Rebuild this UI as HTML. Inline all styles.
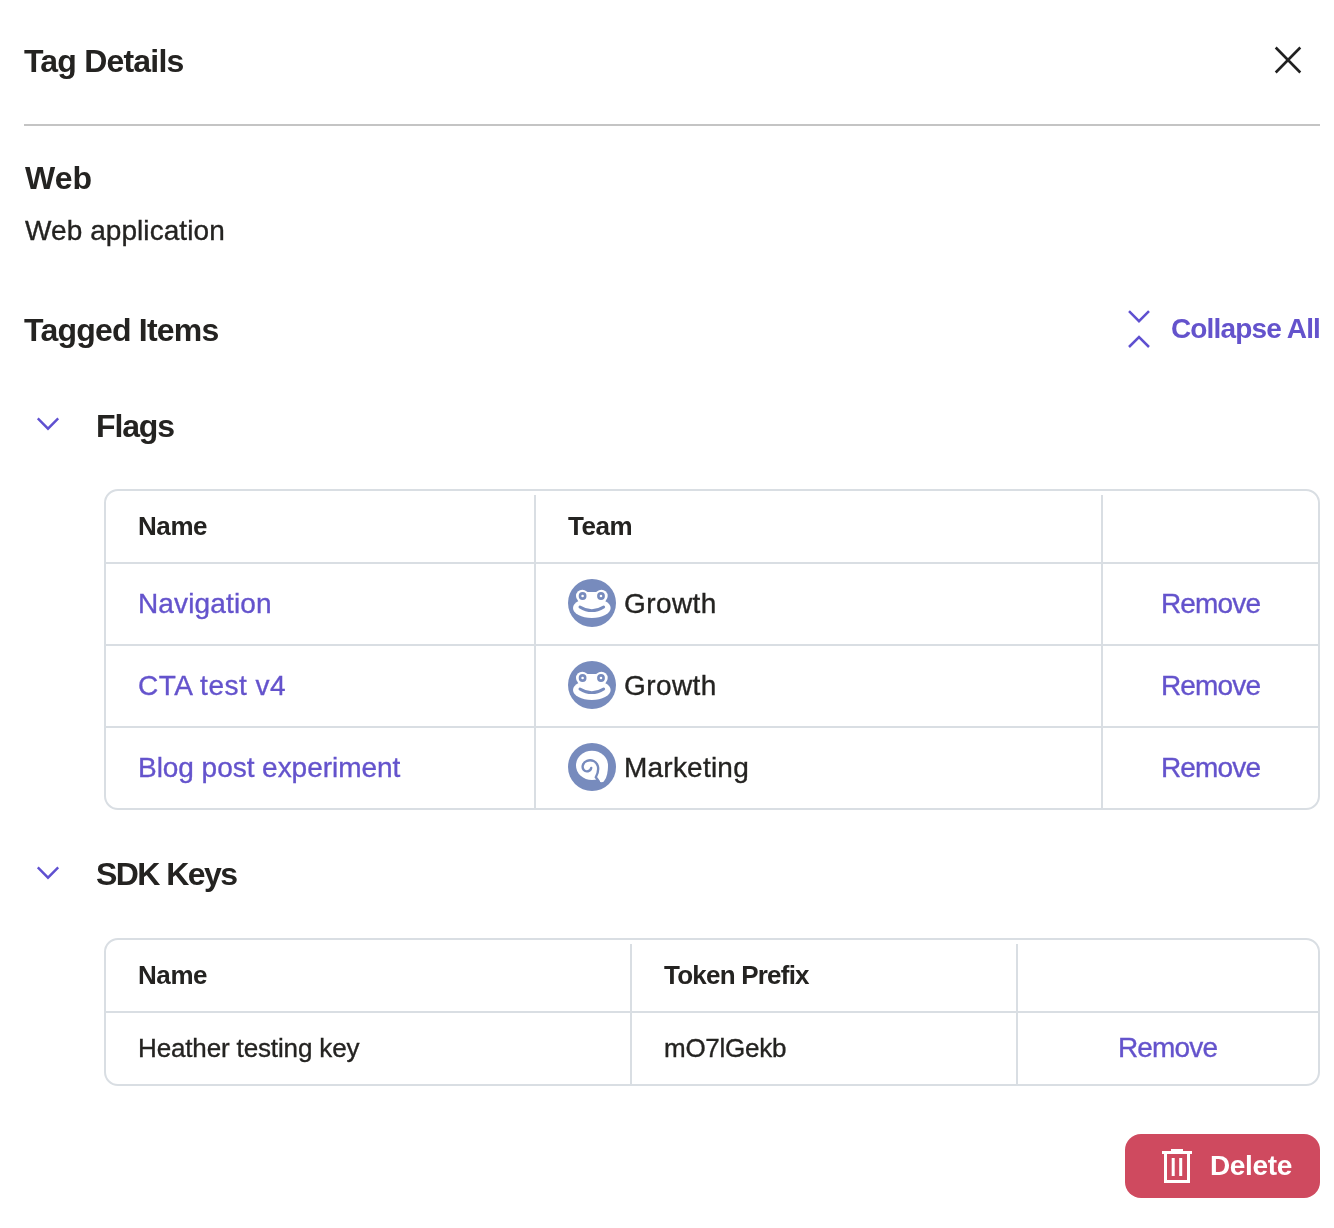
<!DOCTYPE html>
<html>
<head>
<meta charset="utf-8">
<style>
html,body{margin:0;padding:0;background:#fff;}
body{width:1334px;height:1228px;position:relative;overflow:hidden;font-family:"Liberation Sans",sans-serif;color:#242321;}
.t{position:absolute;white-space:nowrap;will-change:transform;}
.b32{font-weight:700;font-size:32px;line-height:32px;}
.b28{font-weight:700;font-size:28px;line-height:28px;}
.b26{font-weight:700;font-size:26px;line-height:26px;}
.r28{font-weight:400;font-size:28px;line-height:28px;-webkit-text-stroke:0.35px currentColor;}
.r26{font-weight:400;font-size:26px;line-height:26px;-webkit-text-stroke:0.35px currentColor;}
.p{color:#6453cc;}
.hl{position:absolute;height:2px;background:#d9dee3;}
.vl{position:absolute;width:2px;background:#d9dee3;}
.box{position:absolute;box-sizing:border-box;border:2px solid #d9dee3;border-radius:14px;}
svg{position:absolute;overflow:visible;}
</style>
</head>
<body>
<!-- header -->
<div class="t b32" style="left:24px;top:45px;letter-spacing:-0.8px;">Tag Details</div>
<svg style="left:1270px;top:42px" width="36" height="36" viewBox="0 0 36 36">
  <path d="M5.7 5.5 L30.3 30.5 M30.3 5.5 L5.7 30.5" stroke="#212121" stroke-width="2.6" fill="none"/>
</svg>
<div style="position:absolute;left:24px;top:124px;width:1296px;height:2px;background:#c4c4c4;"></div>

<div class="t b32" style="left:25px;top:162px;">Web</div>
<div class="t r28" style="left:25px;top:217px;letter-spacing:0.07px;">Web application</div>

<div class="t b32" style="left:24px;top:314px;letter-spacing:-0.78px;">Tagged Items</div>
<svg style="left:1120px;top:300px" width="40" height="56" viewBox="0 0 40 56">
  <path d="M9 11.2 L19 21.2 L29 11.2 M9 47 L19 37 L29 47" stroke="#5f50d0" stroke-width="2.5" fill="none"/>
</svg>
<div class="t b28 p" style="left:1171px;top:315px;letter-spacing:-0.85px;">Collapse All</div>

<!-- Flags -->
<svg style="left:30px;top:410px" width="40" height="30" viewBox="0 0 40 30">
  <path d="M7.8 8.4 L18 18.7 L28.2 8.4" stroke="#5f50d0" stroke-width="2.4" fill="none"/>
</svg>
<div class="t b32" style="left:96px;top:410px;letter-spacing:-1.15px;">Flags</div>

<div class="box" style="left:104px;top:489px;width:1216px;height:321px;"></div>
<div class="hl" style="left:106px;top:562px;width:1212px;"></div>
<div class="hl" style="left:106px;top:644px;width:1212px;"></div>
<div class="hl" style="left:106px;top:726px;width:1212px;"></div>
<div class="vl" style="left:534px;top:495px;height:313px;"></div>
<div class="vl" style="left:1101px;top:495px;height:313px;"></div>

<div class="t b26" style="left:138px;top:513px;letter-spacing:-0.43px;">Name</div>
<div class="t b26" style="left:568px;top:513px;letter-spacing:-0.43px;">Team</div>

<div class="t r28 p" style="left:138px;top:590px;letter-spacing:0.14px;">Navigation</div>
<div class="t r28 p" style="left:138px;top:672px;letter-spacing:0.49px;">CTA test v4</div>
<div class="t r28 p" style="left:138px;top:754px;letter-spacing:-0.04px;">Blog post experiment</div>

<div id="av1" style="position:absolute;left:568px;top:579px;width:48px;height:48px;"><svg width="48" height="48" viewBox="0 0 48 48" style="left:0;top:0">
<circle cx="24" cy="24" r="24" fill="#778bbd"/>
<g fill="#fff"><ellipse cx="23.8" cy="29" rx="18.8" ry="10"/><circle cx="14.3" cy="17" r="6.3"/><circle cx="33.4" cy="17" r="6.3"/><rect x="12" y="13" width="24" height="14"/></g>
<circle cx="14.6" cy="17" r="2.6" fill="#fff" stroke="#778bbd" stroke-width="2.6"/>
<circle cx="33" cy="17" r="2.6" fill="#fff" stroke="#778bbd" stroke-width="2.6"/>
<path d="M11.9 28 Q23.8 35.4 35.7 28" fill="none" stroke="#778bbd" stroke-width="2.8" stroke-linecap="round"/>
</svg></div>
<div id="av2" style="position:absolute;left:568px;top:661px;width:48px;height:48px;"><svg width="48" height="48" viewBox="0 0 48 48" style="left:0;top:0">
<circle cx="24" cy="24" r="24" fill="#778bbd"/>
<g fill="#fff"><ellipse cx="23.8" cy="29" rx="18.8" ry="10"/><circle cx="14.3" cy="17" r="6.3"/><circle cx="33.4" cy="17" r="6.3"/><rect x="12" y="13" width="24" height="14"/></g>
<circle cx="14.6" cy="17" r="2.6" fill="#fff" stroke="#778bbd" stroke-width="2.6"/>
<circle cx="33" cy="17" r="2.6" fill="#fff" stroke="#778bbd" stroke-width="2.6"/>
<path d="M11.9 28 Q23.8 35.4 35.7 28" fill="none" stroke="#778bbd" stroke-width="2.8" stroke-linecap="round"/>
</svg></div>
<div id="av3" style="position:absolute;left:568px;top:743px;width:48px;height:48px;"><svg width="48" height="48" viewBox="0 0 48 48" style="left:0;top:0">
<circle cx="24" cy="24" r="24" fill="#778bbd"/>
<g fill="#fff"><ellipse cx="24" cy="22.4" rx="16" ry="14.6"/><path d="M39.6 21 Q40.6 33 35.8 38.4 Q33.6 40.2 31 38 L26.5 32 Z"/></g>
<path d="M23.2 25 C22.5 28.5 18 29.5 15.8 27 C13.6 24.5 14.5 19.5 19 17.8 C23.5 16 28.5 18.5 29.8 23 C31 27.5 29.5 31 27.8 34.2 L30.8 38.4" fill="none" stroke="#778bbd" stroke-width="2.4" stroke-linecap="round"/>
</svg></div>

<div class="t r28" style="left:624px;top:590px;letter-spacing:0.4px;">Growth</div>
<div class="t r28" style="left:624px;top:672px;letter-spacing:0.4px;">Growth</div>
<div class="t r28" style="left:624px;top:754px;letter-spacing:0.22px;">Marketing</div>

<div class="t r28 p" style="left:1161px;top:590px;letter-spacing:-0.86px;">Remove</div>
<div class="t r28 p" style="left:1161px;top:672px;letter-spacing:-0.86px;">Remove</div>
<div class="t r28 p" style="left:1161px;top:754px;letter-spacing:-0.86px;">Remove</div>

<!-- SDK Keys -->
<svg style="left:30px;top:859px" width="40" height="30" viewBox="0 0 40 30">
  <path d="M7.8 8.4 L18 18.7 L28.2 8.4" stroke="#5f50d0" stroke-width="2.4" fill="none"/>
</svg>
<div class="t b32" style="left:96px;top:858px;letter-spacing:-1.56px;">SDK Keys</div>

<div class="box" style="left:104px;top:938px;width:1216px;height:148px;"></div>
<div class="hl" style="left:106px;top:1011px;width:1212px;"></div>
<div class="vl" style="left:630px;top:944px;height:140px;"></div>
<div class="vl" style="left:1016px;top:944px;height:140px;"></div>

<div class="t b26" style="left:138px;top:962px;letter-spacing:-0.43px;">Name</div>
<div class="t b26" style="left:664px;top:962px;letter-spacing:-0.78px;">Token Prefix</div>
<div class="t r26" style="left:138px;top:1035px;letter-spacing:-0.14px;">Heather testing key</div>
<div class="t r26" style="left:663.5px;top:1035px;letter-spacing:-0.26px;">mO7lGekb</div>
<div class="t r28 p" style="left:1118px;top:1034px;letter-spacing:-0.86px;">Remove</div>

<!-- Delete button -->
<div style="position:absolute;left:1125px;top:1134px;width:195px;height:64px;border-radius:16px;background:#cf4a5f;"></div>
<svg style="left:1150px;top:1140px" width="50" height="50" viewBox="1150 1140 50 50">
<g fill="#fff"><rect x="1162" y="1151" width="30" height="3"/><rect x="1171" y="1149" width="12" height="3"/><rect x="1171.7" y="1158" width="3" height="18"/><rect x="1179.2" y="1158" width="3" height="18"/></g>
<path d="M1165.5 1153 V1181.5 H1188.5 V1153" fill="none" stroke="#fff" stroke-width="3"/>
</svg>
<div class="t b28" style="left:1210px;top:1152px;color:#fff;letter-spacing:-0.35px;">Delete</div>
</body>
</html>
